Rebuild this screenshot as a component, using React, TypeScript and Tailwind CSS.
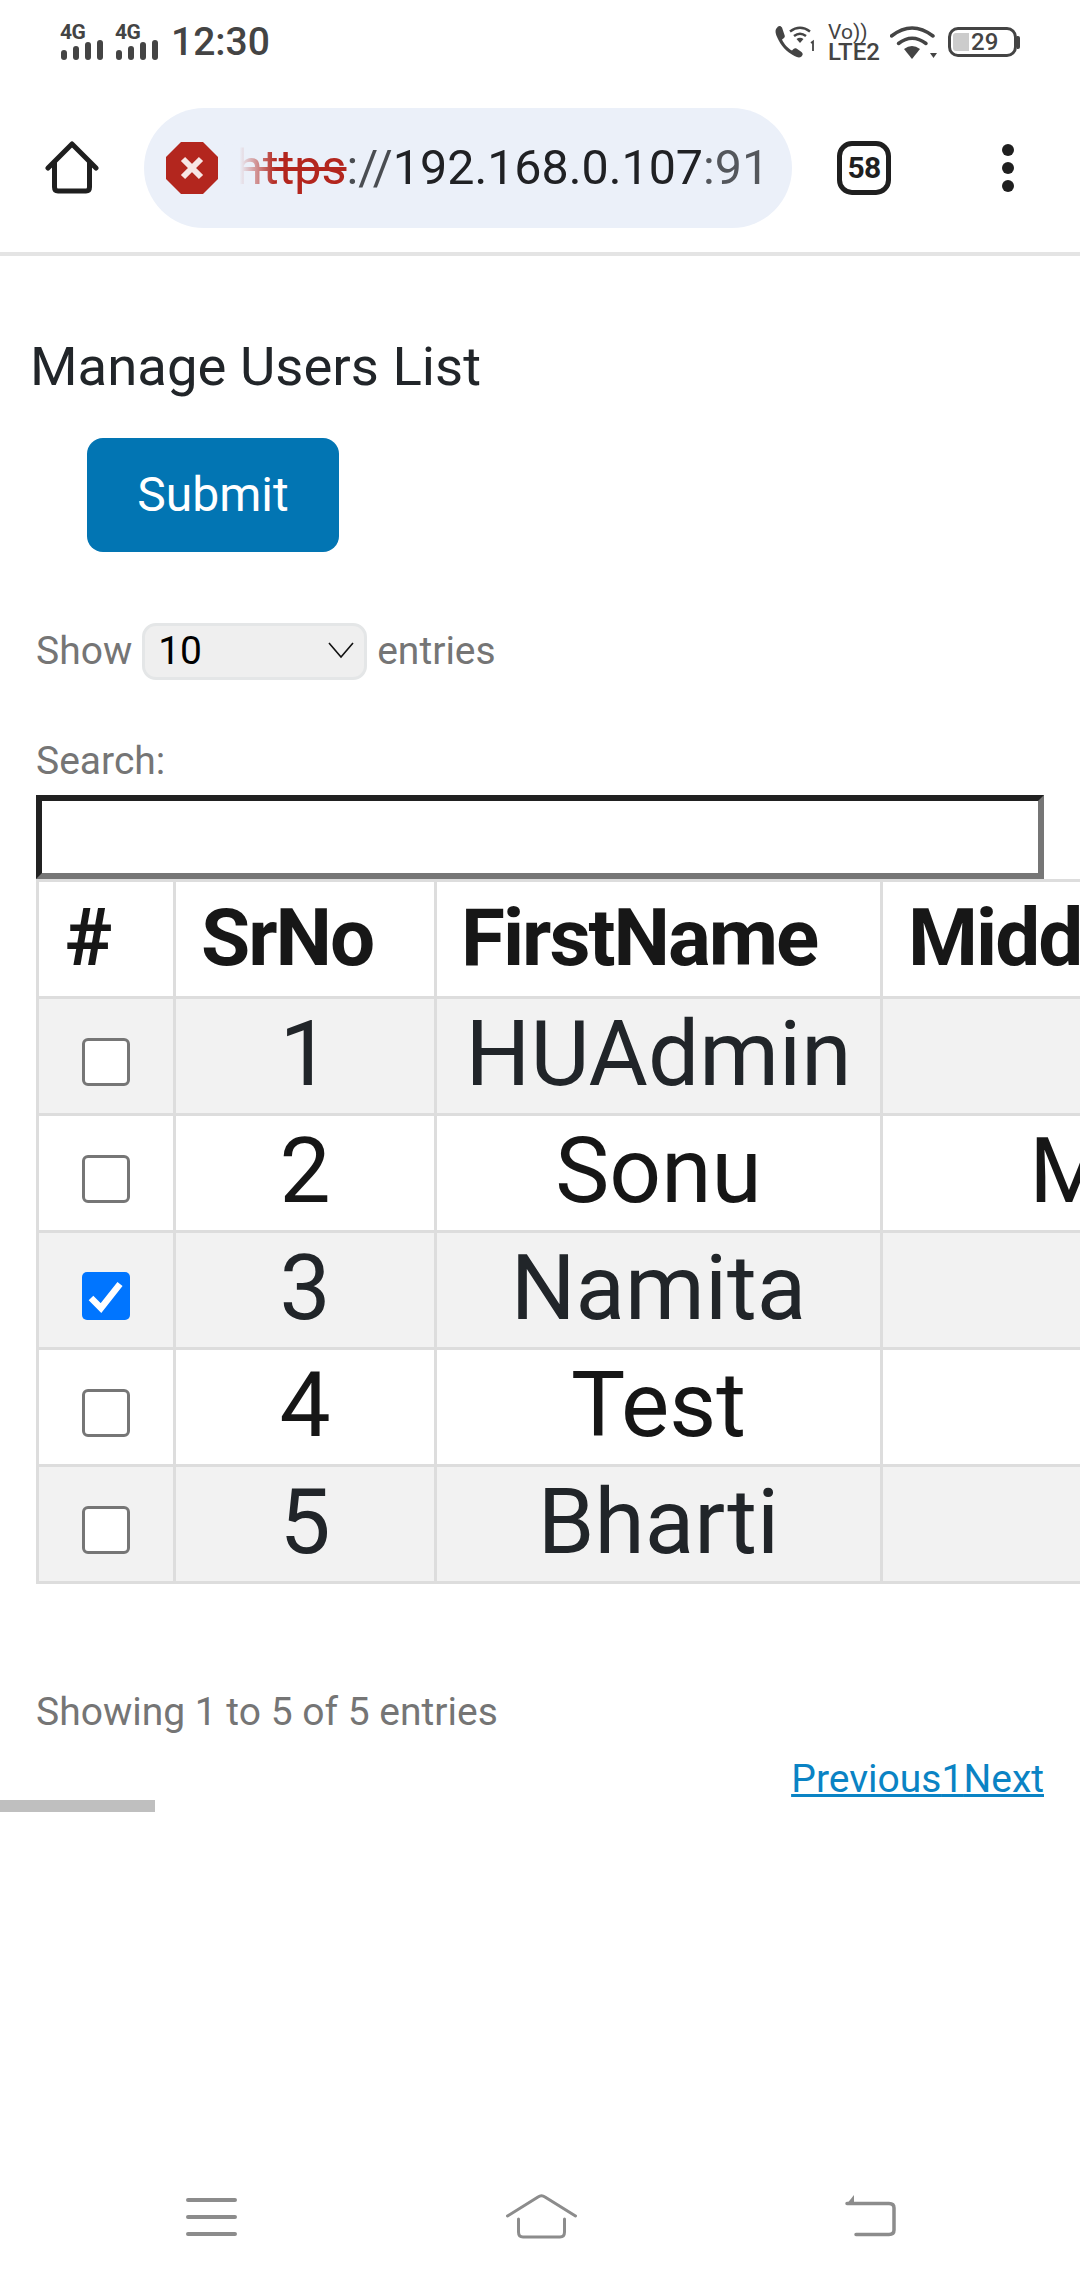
import React from "react";

type Row = {
  id: number;
  name: string;
  middle?: string;
  checked?: boolean;
};

const rows: Row[] = [
  { id: 1, name: "HUAdmin" },
  { id: 2, name: "Sonu", middle: "M" },
  { id: 3, name: "Namita", checked: true },
  { id: 4, name: "Test" },
  { id: 5, name: "Bharti" },
];

const SignalGroup = () => (
  <div className="flex flex-col w-[44px]">
    <span className="text-[21px] leading-[15px] font-bold text-[#444444] tracking-tight">4G</span>
    <svg width="44" height="20" viewBox="0 0 44 20" className="block">
      <rect x="1" y="10" width="6" height="10" rx="3" fill="#444444" />
      <rect x="13" y="6" width="6" height="14" rx="3" fill="#444444" />
      <rect x="25" y="2" width="6" height="18" rx="3" fill="#444444" />
      <rect x="37" y="0" width="6" height="20" rx="3" fill="#444444" />
    </svg>
  </div>
);

const StatusBar = () => (
  <div className="h-[84px] flex items-center justify-between pl-[60px] pr-[60px] text-[#444444]">
    <div className="flex items-center">
      <SignalGroup />
      <div className="w-[11px]" />
      <SignalGroup />
      <span className="ml-[12px] text-[39px] leading-[44px] font-medium">12:30</span>
    </div>
    <div className="flex items-center">
      <svg width="40" height="34" viewBox="0 0 40 34">
        <path
          d="M1 4c-1 2-.5 5 1.500 9 3 7 9 14 17 18 3 1.500 5 2 7 .5l1-1.500c.5-1 0-2-1-3l-5-3.500c-1-.5-2-.5-3 .5l-1.500 1.500c-4-2-8-6.500-10-11l2-1.500c1-1 1-2 .5-3L7 2.500C6 1 4.500 .5 3 1.500z"
          fill="#444444"
        />
        <path d="M15 6.500Q25 -1 35 6.500M19 11Q25 6.500 31 11" fill="none" stroke="#444444" strokeWidth="2.500" />
        <path d="M21.500 14Q25 11.500 28.500 14L25 18z" fill="#444444" />
        <path d="M36 18l2-1.500V26" fill="none" stroke="#444444" strokeWidth="1.800" />
      </svg>
      <div className="ml-[13px] w-[52px] flex flex-col text-[#444444]">
        <span className="text-[21px] leading-[20px]">Vo))</span>
        <span className="text-[24px] leading-[20px] font-medium whitespace-nowrap">LTE2</span>
      </div>
      <svg width="47" height="33" viewBox="0 0 47 33" className="ml-[10px]">
        <path d="M1.500 10Q22 -6 43 10" fill="none" stroke="#444444" strokeWidth="3.500" strokeLinecap="round" />
        <path d="M8.500 17.500Q22 7 36 17.500" fill="none" stroke="#444444" strokeWidth="3.500" strokeLinecap="round" />
        <path d="M14 23Q22 17 30 23L22 33z" fill="#444444" />
        <path d="M40 27h7l-3.500 5z" fill="#444444" />
      </svg>
      <div className="ml-[11px] flex items-center">
        <div className="w-[69px] h-[30px] border-[3px] border-[#444444] rounded-[10px] flex items-center pl-[2px]">
          <div className="w-[16px] h-[18px] bg-[#cccccc] rounded-l-[3px]" />
          <span className="ml-[2px] text-[24px] leading-none font-medium">29</span>
        </div>
        <div className="w-[3px] h-[13px] bg-[#444444] rounded-r-[2px]" />
      </div>
    </div>
  </div>
);

const BrowserBar = () => (
  <div className="h-[172px] shrink-0 flex items-center pl-[45px] border-b-[4px] border-[#e4e4e4]">
    <svg width="54" height="54" viewBox="0 0 54 54" className="shrink-0">
      <path
        d="M3 27L27 3L51 27M9.500 22V46Q9.500 50 13 50H41Q44.500 50 44.500 46V22"
        fill="none"
        stroke="#1f1f1f"
        strokeWidth="5"
        strokeLinecap="round"
        strokeLinejoin="round"
      />
    </svg>
    <div className="relative ml-[45px] w-[648px] h-[120px] rounded-full bg-[#ebf0f9] flex items-center pl-[22px] shrink-0 overflow-hidden">
      <svg width="52" height="52" viewBox="0 0 52 52" className="shrink-0">
        <path d="M15 0H37L52 15V37L37 52H15L0 37V15z" fill="#b3261e" />
        <path d="M17 17L35 35M35 17L17 35" stroke="#f7e6e5" strokeWidth="6" />
      </svg>
      <div className="ml-[18px] text-[48.4px] leading-[60px] whitespace-nowrap text-[#202124]">
        <span className="text-[#b3261e] line-through">https</span>
        <span className="text-[#4a4d52]">://</span>
        <span>192.168.0.107</span>
        <span className="text-[#54575c]">:91</span>
      </div>
      <div className="absolute left-[76px] top-[30px] w-[56px] h-[60px] bg-linear-to-r from-[#ebf0f9] from-35% to-transparent" />
    </div>
    <div className="ml-[45px] w-[54px] h-[54px] shrink-0 border-[5px] border-[#1f1f1f] rounded-[15px] flex items-center justify-center text-[30px] tracking-tight font-bold text-[#1f1f1f] leading-none">
      58
    </div>
    <div className="ml-[111px] flex flex-col gap-[6px] shrink-0">
      <span className="block w-[12px] h-[12px] rounded-full bg-[#1f1f1f]" />
      <span className="block w-[12px] h-[12px] rounded-full bg-[#1f1f1f]" />
      <span className="block w-[12px] h-[12px] rounded-full bg-[#1f1f1f]" />
    </div>
  </div>
);

const Checkbox = ({ checked }: { checked?: boolean }) =>
  checked ? (
    <div className="w-[48px] h-[48px] mx-auto rounded-[5px] bg-[#0075ff] flex items-center justify-center">
      <svg width="36" height="34" viewBox="0 0 36 34">
        <path d="M3 19L13 29L32 5" fill="none" stroke="#ffffff" strokeWidth="6.500" />
      </svg>
    </div>
  ) : (
    <div className="w-[48px] h-[48px] mx-auto rounded-[6px] bg-white border-[3px] border-[#767676]" />
  );

const UsersTable = () => (
  <div className="w-full overflow-hidden pl-[36px]">
    <table className="table-fixed w-[1219px] border-separate border-spacing-0">
      <colgroup>
        <col className="w-[137px]" />
        <col className="w-[261px]" />
        <col className="w-[446px]" />
        <col className="w-[375px]" />
      </colgroup>
      <thead>
        <tr className="text-[#171717] text-[80px] tracking-tight">
          <th className="h-[117px] p-0 pb-[2px] pl-[26px] text-left font-bold leading-none whitespace-nowrap border-t-[3px] border-l-[3px] border-[#dddddd]">#</th>
          <th className="h-[117px] p-0 pb-[2px] pl-[25px] text-left font-bold leading-none whitespace-nowrap border-t-[3px] border-l-[3px] border-[#dddddd]">SrNo</th>
          <th className="h-[117px] p-0 pb-[2px] pl-[24px] text-left font-bold leading-none whitespace-nowrap border-t-[3px] border-l-[3px] border-[#dddddd]">FirstName</th>
          <th className="h-[117px] p-0 pb-[2px] pl-[25px] text-left font-bold leading-none whitespace-nowrap border-t-[3px] border-l-[3px] border-[#dddddd]">MiddleName</th>
        </tr>
      </thead>
      <tbody>
        {rows.map((r, i) => {
          const odd = i % 2 === 0;
          const bottom = i === rows.length - 1 ? "border-b-[3px] h-[120px]" : "h-[117px]";
          return (
            <tr key={r.id} className={odd ? "bg-[#f2f2f2] text-[#212529]" : "bg-white text-[#161616]"}>
              <td className={`p-0 pt-[39px] align-top border-t-[3px] border-l-[3px] border-[#dddddd] ${bottom}`}>
                <Checkbox checked={r.checked} />
              </td>
              <td className={`p-0 pb-[3px] text-center text-[91px] leading-none border-t-[3px] border-l-[3px] border-[#dddddd] ${bottom}`}>{r.id}</td>
              <td className={`p-0 pb-[3px] text-center text-[91px] leading-none border-t-[3px] border-l-[3px] border-[#dddddd] ${bottom}`}>{r.name}</td>
              <td className={`p-0 pb-[3px] text-center text-[91px] leading-none border-t-[3px] border-l-[3px] border-[#dddddd] ${bottom}`}>{r.middle}</td>
            </tr>
          );
        })}
      </tbody>
    </table>
  </div>
);

const NavBar = () => (
  <div className="mt-auto pb-[40px] pl-[186px] flex items-center">
    <svg width="51" height="48" viewBox="0 0 51 48">
      <path d="M2 8H49M2 25H49M2 42H49" stroke="#8c8c8c" strokeWidth="4" strokeLinecap="round" />
    </svg>
    <svg width="71" height="48" viewBox="0 0 71 48" className="ml-[269px]">
      <path
        d="M1.500 24L32 5Q35.500 2.500 39 5L69.500 24M12.500 27V40Q12.500 45 17 45H54Q58.500 45 58.500 40V27"
        fill="none"
        stroke="#8c8c8c"
        strokeWidth="3"
        strokeLinecap="round"
      />
    </svg>
    <svg width="51" height="48" viewBox="0 0 51 48" className="ml-[268px]">
      <path d="M1 13L9 3V13z" fill="#8c8c8c" />
      <path d="M2 11.500H44Q49 11.500 49 16V38Q49 42.500 44 42.500H11" fill="none" stroke="#8c8c8c" strokeWidth="3.500" strokeLinecap="round" />
    </svg>
  </div>
);

const App = () => {
  return (
    <div className="w-[1080px] h-[2280px] overflow-hidden bg-white flex flex-col font-['Roboto',sans-serif]">
      <StatusBar />
      <BrowserBar />

      <h1 className="mt-[70px] pl-[30px] text-[54.5px] leading-[80px] font-normal text-[#212529]">Manage Users List</h1>

      <button className="mt-[32px] ml-[87px] w-[252px] h-[114px] rounded-[16px] bg-[#0275b3] text-white text-[48px] leading-none">
        Submit
      </button>

      <div className="mt-[70px] pl-[36px] h-[57px] flex items-center gap-[10px] text-[39px] text-[#757575]">
        <span className="h-[57px] leading-[59px]">Show</span>
        <div className="relative w-[225px] h-[57px]">
          <select className="w-full h-full appearance-none pl-[13px] rounded-[14px] bg-[#efefef] border-[3px] border-[#e4e6e7] text-black text-[39px] leading-none">
            <option>10</option>
          </select>
          <svg width="26" height="17" viewBox="0 0 26 17" className="absolute right-[13px] top-[20px]">
            <path d="M1 1L13 15L25 1" fill="none" stroke="#111111" strokeWidth="1.600" />
          </svg>
        </div>
        <span className="h-[57px] leading-[59px]">entries</span>
      </div>

      <label className="mt-[54px] mb-[5px] pl-[36px] text-[39px] leading-[57px] text-[#757575]">Search:</label>
      <input
        type="text"
        className="ml-[36px] w-[1008px] h-[84px] shrink-0 bg-white border-[6px] border-t-[#212121] border-l-[#212121] border-b-[#767676] border-r-[#767676]"
      />

      <UsersTable />

      <div className="mt-[100px] pl-[36px] text-[39px] leading-[57px] text-[#757575]">Showing 1 to 5 of 5 entries</div>
      <div className="mt-[17px] pr-[36px] text-right text-[39px] leading-[42px] text-[#0a83c4] underline">
        <a>Previous</a>
        <a>1</a>
        <a>Next</a>
      </div>
      <div className="w-[155px] h-[12px] bg-[#bfbfbf]" />

      <NavBar />
    </div>
  );
};

export default App;
